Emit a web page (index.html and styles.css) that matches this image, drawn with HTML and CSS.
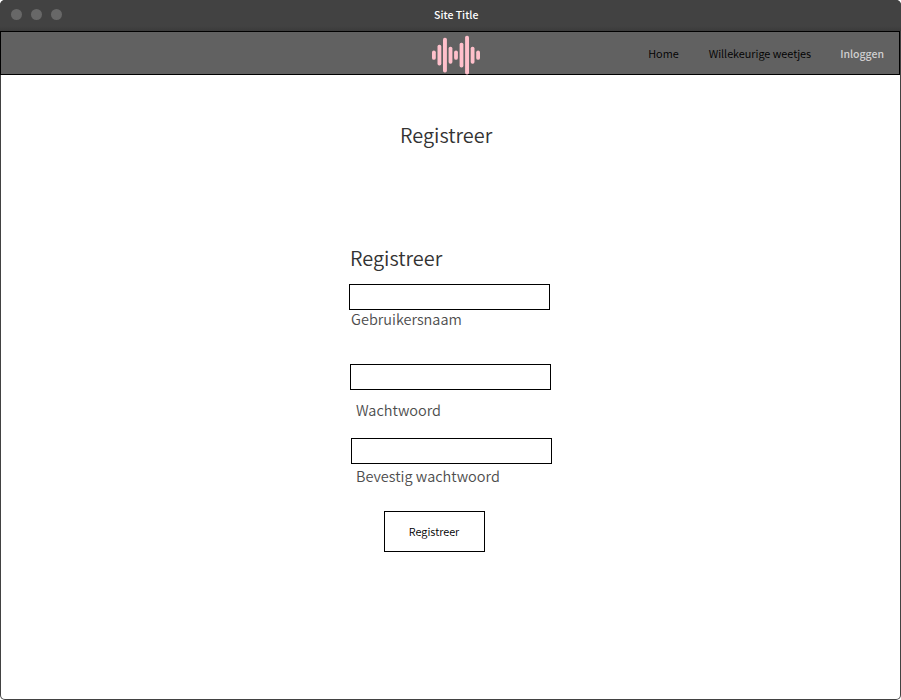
FILE: index.html
```html
<!DOCTYPE html>
<html lang="nl">
<head>
<meta charset="utf-8">
<title>Site Title</title>
<link rel="stylesheet" href="styles.css">
</head>
<body>
<div class="window">
  <header class="titlebar">
    <div class="dots"><i class="dot"></i><i class="dot"></i><i class="dot"></i></div>
    <span class="site-title">Site Title</span>
  </header>
  <nav class="nav">
    <svg class="logo" width="48" height="40" viewBox="0 0 48 40" fill="#ffc0cb">
      <rect x="0" y="15.4" width="3.8" height="9.4" rx="1.9"/>
      <rect x="5.5" y="9.8" width="3.8" height="20.6" rx="1.7"/>
      <rect x="11" y="2.7" width="3.9" height="34.8" rx="1.7"/>
      <rect x="16.6" y="11.7" width="3.8" height="17" rx="1.7"/>
      <rect x="22.1" y="15.4" width="3.8" height="9.4" rx="1.9"/>
      <rect x="27.6" y="7.7" width="3.8" height="24.8" rx="1.7"/>
      <rect x="33.1" y="0.8" width="3.9" height="38.6" rx="1.7"/>
      <rect x="38.7" y="11.7" width="3.8" height="17" rx="1.7"/>
      <rect x="44.2" y="15.4" width="3.8" height="9.4" rx="1.9"/>
    </svg>
    <div class="links">
      <a class="link">Home</a>
      <a class="link">Willekeurige weetjes</a>
      <a class="link link-login">Inloggen</a>
    </div>
  </nav>
  <main class="content">
    <h1 class="heading page-heading">Registreer</h1>
    <form class="form">
      <h2 class="heading">Registreer</h2>
      <input class="field" id="user" type="text">
      <label class="label label-user" for="user">Gebruikersnaam</label>
      <input class="field field-pass" id="pass" type="password">
      <label class="label label-pass" for="pass">Wachtwoord</label>
      <input class="field field-confirm" id="confirm" type="password">
      <label class="label label-confirm" for="confirm">Bevestig wachtwoord</label>
      <button class="submit" type="button">Registreer</button>
    </form>
  </main>
</div>
</body>
</html>
```

FILE: styles.css
```css
* { box-sizing: border-box; }

body {
  margin: 0;
  background: #fff;
  font-family: "Source Sans Pro", "Noto Sans CJK JP", sans-serif;
}

.window {
  width: 901px;
  height: 700px;
  overflow: hidden;
  border-radius: 5px;
  background: #424242;
  display: flex;
  flex-direction: column;
}

.titlebar {
  height: 31px;
  flex: none;
  display: grid;
  grid-template-columns: 434px auto;
  align-items: start;
  background: linear-gradient(#424242 26px, #3b3b3b);
}

.dots { display: flex; gap: 9px; padding: 9px 0 0 11px; }

.dot { width: 11px; height: 11px; border-radius: 50%; background: #686868; }

.site-title {
  padding-top: 5px;
  font-size: 10.5px;
  line-height: 20px;
  font-weight: 500;
  color: #fff;
  white-space: nowrap;
}

.nav {
  width: 900px;
  height: 44px;
  flex: none;
  display: flex;
  justify-content: space-between;
  align-items: flex-start;
  padding: 3px 15px 0 431px;
  border: 1px solid #000;
  background: #616161;
}

.logo { display: block; }

.links { display: flex; gap: 30px; padding-top: 8px; }

.link {
  font-size: 10.9px;
  line-height: 20px;
  font-weight: 350;
  color: #000;
  white-space: nowrap;
}

.link-login {
  margin-left: -1px;
  padding-top: 1px;
  font-size: 10.5px;
  font-weight: 500;
  color: #d0d0d0;
}

.content {
  flex: 1;
  margin: 0 1px 1px;
  border-radius: 0 0 4px 4px;
  background: #fff;
}

.heading {
  margin: 0;
  font-size: 19.9px;
  line-height: 30px;
  font-weight: 350;
  color: #333;
}

.page-heading { padding: 45px 0 0 399px; }

.form {
  display: flex;
  flex-direction: column;
  align-items: flex-start;
  padding: 93px 0 0 348px;
}

.form .heading { margin-left: 1px; }

.field {
  width: 201px;
  height: 26px;
  margin: 11px 0 0;
  padding: 0 6px;
  border: 1px solid #000;
  border-radius: 0;
  background: #fff;
  font: inherit;
}

.field-pass { margin: 35px 0 0 1px; }

.field-confirm { margin: 18px 0 0 2px; }

.label { font-size: 14.5px; line-height: 20px; font-weight: 350; color: #4d4d4d; }

.label-user { margin: -1px 0 0 2px; }

.label-pass { margin: 10px 0 0 7px; }

.label-confirm { margin: 2px 0 0 7px; }

.submit {
  width: 101px;
  height: 41px;
  margin: 25px 0 0 35px;
  padding: 0 1px 2px 0;
  border: 1px solid #000;
  background: #fff;
  font-family: inherit;
  font-size: 10.9px;
  font-weight: 350;
  color: #000;
}
```
